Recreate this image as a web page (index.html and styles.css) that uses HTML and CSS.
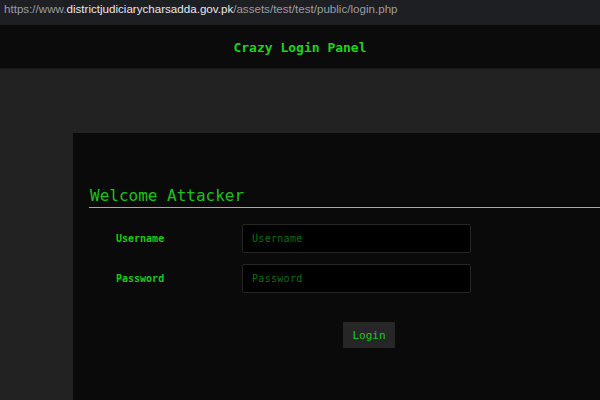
FILE: index.html
```html
<!DOCTYPE html>
<html>
<head>
<meta charset="utf-8">
<link rel="stylesheet" href="styles.css">
</head>
<body>
<div class="urlbar"><span class="dim">https://www.</span><span class="host">districtjudiciarycharsadda.gov.pk</span><span class="dim">/assets/test/test/public/login.php</span></div>
<div class="header"><span class="title">Crazy Login Panel</span></div>
<div class="main">
  <div class="panel">
    <h2 class="welcome">Welcome Attacker</h2>
    <div class="form">
      <div class="row">
        <label class="label">Username</label>
        <input class="field" type="text" placeholder="Username">
      </div>
      <div class="row">
        <label class="label">Password</label>
        <input class="field" type="password" placeholder="Password">
      </div>
      <div class="actions">
        <button class="btn">Login</button>
      </div>
    </div>
  </div>
</div>
</body>
</html>
```
FILE: styles.css
```css
html, body {
  margin: 0;
  padding: 0;
  height: 100%;
  background: #222222;
  overflow: hidden;
}
body {
  display: flex;
  flex-direction: column;
}
.urlbar {
  height: 25px;
  background: #1e1f23;
  font-family: "Liberation Sans", Arial, sans-serif;
  font-size: 11.6px;
  line-height: 17px;
  padding-left: 4px;
  white-space: nowrap;
}
.dim { color: #9a9ca2; }
.host { color: #e8e8ea; }
.header {
  height: 43px;
  background: #0b0b0c;
  display: flex;
  align-items: center;
  justify-content: center;
  border-bottom: 1px solid #1a1a1a;
}
.title {
  font-family: "DejaVu Sans Mono", monospace;
  font-size: 13px;
  font-weight: bold;
  color: #1fd11f;
  margin-top: 1px;
}
.main {
  flex: 1;
  padding-top: 64px;
  padding-left: 73px;
  display: flex;
}
.panel {
  flex: 1;
  background: #0a0a0a;
  padding-top: 53px;
}
.welcome {
  margin: 0 0 0 16px;
  font-family: "DejaVu Sans Mono", monospace;
  font-weight: normal;
  font-size: 16px;
  line-height: 20px;
  color: #1cc21c;
  padding-bottom: 1px;
  border-bottom: 1px solid #a8a8a8;
  padding-left: 1px;
}
.form {
  padding-top: 16px;
  padding-left: 43px;
}
.row {
  display: flex;
  align-items: center;
  height: 28px;
  margin-bottom: 12px;
}
.label {
  width: 126px;
  font-family: "DejaVu Sans Mono", monospace;
  font-size: 10px;
  font-weight: bold;
  color: #1ec81e;
}
.field {
  box-sizing: border-box;
  width: 229px;
  height: 29px;
  background: #000;
  border: 1px solid #262626;
  border-radius: 2px;
  padding: 0 9px;
  font-family: "DejaVu Sans Mono", monospace;
  font-size: 10px;
  color: #1ec81e;
  outline: none;
}
.field::placeholder {
  color: #0f6e10;
  letter-spacing: 0.3px;
}
.actions {
  padding-left: 227px;
  padding-top: 18px;
}
.btn {
  width: 52px;
  height: 26px;
  background: #262626;
  border: none;
  border-radius: 1px;
  font-family: "DejaVu Sans Mono", monospace;
  font-size: 11px;
  color: #1ec81e;
  padding: 0;
}
```
